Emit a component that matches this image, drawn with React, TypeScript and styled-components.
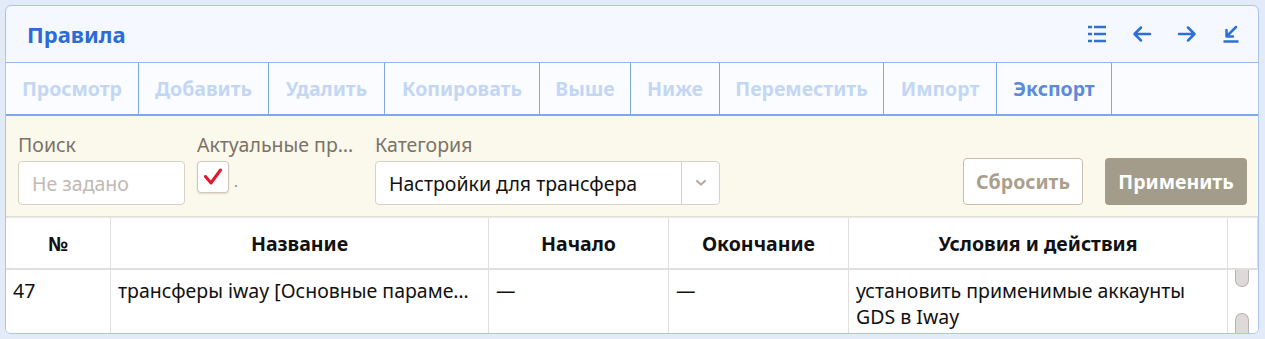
import * as React from "react";
import styled, { createGlobalStyle } from "styled-components";

const GlobalStyle = createGlobalStyle`
  html, body {
    margin: 0;
    padding: 0;
    background: #e3ebf8;
  }
  body {
    font-family: "Noto Sans", "Open Sans", sans-serif;
    font-size: 19.5px;
  }
  * {
    box-sizing: border-box;
  }
`;

const Page = styled.div`
  padding: 5px 6px 5px 5px;
`;

const Panel = styled.div`
  display: flex;
  flex-direction: column;
  height: 329px;
  border: 1px solid #a9c5f0;
  border-radius: 6px;
  background: #f5f8ff;
  overflow: hidden;
`;

const Header = styled.div`
  display: flex;
  align-items: center;
  height: 56px;
  padding: 0 18px 0 21px;
`;

const Title = styled.div`
  flex: 1;
  font-size: 22px;
  font-weight: 700;
  color: #2c6bd6;
`;

const HeaderIcons = styled.div`
  display: flex;
  align-items: center;
  gap: 25px;
  color: #2f6fd8;

  svg {
    display: block;
  }
`;

const Toolbar = styled.div`
  display: flex;
  height: 54px;
  border-top: 1px solid #94b8ee;
  border-bottom: 2px solid #7ea8e8;
  background: #fafcff;
`;

const ToolButton = styled.div<{ $active?: boolean; $width: number }>`
  display: flex;
  align-items: center;
  justify-content: center;
  width: ${(p) => p.$width}px;
  border-right: 1px solid #7ea8e8;
  font-weight: 700;
  color: ${(p) => (p.$active ? "#5b8bd9" : "#c3d7f5")};
`;

const Filters = styled.div`
  display: flex;
  align-items: flex-end;
  height: 101px;
  padding: 0 11px 11px 12px;
  background: #fbf8ec;
  border-bottom: 1px solid #e4ded0;
  box-shadow: 0 1px 1px rgba(0, 0, 0, 0.06);
`;

const Field = styled.div<{ $width: number }>`
  display: flex;
  flex-direction: column;
  width: ${(p) => p.$width}px;
  margin-right: 12px;
`;

const Label = styled.div`
  line-height: 27px;
  color: #7b7366;
  margin-bottom: 3px;
  padding-right: 4px;
  white-space: nowrap;
  overflow: hidden;
  text-overflow: ellipsis;
`;

const TextInput = styled.div`
  height: 44px;
  padding: 0 13px;
  display: flex;
  align-items: center;
  border: 1px solid #d9d1c6;
  border-radius: 4px;
  background: #fff;
  color: #c1b9b3;
`;

const CheckRow = styled.div`
  display: flex;
  align-items: flex-end;
  height: 44px;
  gap: 5px;
  padding-bottom: 12px;
`;

const CheckBox = styled.div`
  width: 32px;
  height: 32px;
  border: 1px solid #cfc7bd;
  border-radius: 4px;
  background: #fff;
  box-shadow: 0 1px 2px rgba(0, 0, 0, 0.12);
  display: flex;
  align-items: center;
  justify-content: center;
`;

const Dot = styled.span`
  font-size: 14px;
  line-height: 1;
  color: #8a8276;
  margin-bottom: 4px;
`;

const Select = styled.div`
  display: flex;
  height: 44px;
  border: 1px solid #d9d1c6;
  border-radius: 4px;
  background: #fff;
`;

const SelectValue = styled.div`
  flex: 1;
  display: flex;
  align-items: center;
  padding: 0 13px;
  color: #111;
`;

const SelectArrow = styled.div`
  width: 38px;
  display: flex;
  align-items: center;
  justify-content: center;
  border-left: 1px solid #d9d1c6;
  color: #b5ada3;
`;

const Spacer = styled.div`
  flex: 1;
`;

const Button = styled.div<{ $primary?: boolean; $width: number }>`
  display: flex;
  align-items: center;
  justify-content: center;
  width: ${(p) => p.$width}px;
  height: 47px;
  margin-left: ${(p) => (p.$primary ? 22 : 0)}px;
  border-radius: 4px;
  border: ${(p) => (p.$primary ? "none" : "1px solid #c9bea9")};
  background: ${(p) => (p.$primary ? "#a39c8a" : "#fff")};
  color: ${(p) => (p.$primary ? "#fff" : "#aa9f8c")};
  font-weight: 700;
`;

const Table = styled.div`
  display: grid;
  grid-template-columns: 105px 378px 180px 180px 379px 1fr;
  grid-template-rows: 52px 1fr;
  flex: 1;
  background: #fff;
  margin-top: 1px;
`;

const HeadCell = styled.div`
  display: flex;
  align-items: center;
  justify-content: center;
  border-right: 1px solid #e2dede;
  border-bottom: 2px solid #e2dede;
  font-weight: 700;
  color: #111;
`;

const Cell = styled.div<{ $clip?: boolean }>`
  padding: 8px 14px 0 7px;
  border-right: 1px solid #e2dede;
  line-height: 26px;
  color: #111;
  white-space: ${(p) => (p.$clip ? "nowrap" : "normal")};
  overflow: hidden;
  text-overflow: ellipsis;
`;

const ScrollCell = styled.div`
  display: flex;
  flex-direction: column;
  justify-content: space-between;
  align-items: center;
  padding-right: 2px;
`;

const Thumb = styled.div<{ $top?: boolean }>`
  width: 14px;
  height: ${(p) => (p.$top ? 17 : 20)}px;
  background: #dedada;
  border: 1px solid #b9b4b4;
  border-radius: ${(p) => (p.$top ? "0 0 7px 7px" : "7px 7px 0 0")};
  ${(p) => (p.$top ? "border-top: none;" : "border-bottom: none;")}
`;

const tools = [
  { label: "Просмотр", width: 133 },
  { label: "Добавить", width: 130 },
  { label: "Удалить", width: 116 },
  { label: "Копировать", width: 155 },
  { label: "Выше", width: 91 },
  { label: "Ниже", width: 89 },
  { label: "Переместить", width: 164 },
  { label: "Импорт", width: 113 },
  { label: "Экспорт", width: 115, active: true },
];

const columns = ["№", "Название", "Начало", "Окончание", "Условия и действия", ""];

const ListIcon = () => (
  <svg width="20" height="18" viewBox="0 0 20 18" fill="none" stroke="currentColor" strokeWidth="2.5">
    <path d="M1 2h4M7 2h12M1 9h4M7 9h12M1 16h4M7 16h12" />
  </svg>
);

const ArrowLeft = () => (
  <svg width="20" height="18" viewBox="0 0 20 18" fill="none" stroke="currentColor" strokeWidth="2.5" strokeLinecap="round" strokeLinejoin="round">
    <path d="M18 9H3M9 2.5L2.5 9 9 15.5" />
  </svg>
);

const ArrowRight = () => (
  <svg width="20" height="18" viewBox="0 0 20 18" fill="none" stroke="currentColor" strokeWidth="2.5" strokeLinecap="round" strokeLinejoin="round">
    <path d="M2 9h15M11 2.5L17.5 9 11 15.5" />
  </svg>
);

const CollapseIcon = () => (
  <svg width="18" height="18" viewBox="0 0 18 18" fill="none" stroke="currentColor" strokeWidth="2.5" strokeLinecap="round" strokeLinejoin="round">
    <path d="M14 2L5 11M4.5 5v6.5H11" />
    <path d="M1.5 16.5h15" strokeLinecap="butt" />
  </svg>
);

const CheckMark = () => (
  <svg width="20" height="18" viewBox="0 0 20 18" fill="none" stroke="#e0192c" strokeWidth="3" strokeLinecap="round" strokeLinejoin="round">
    <path d="M2.5 8.5L8 15 17.5 2" />
  </svg>
);

const Chevron = () => (
  <svg width="12" height="8" viewBox="0 0 12 8" fill="none" stroke="currentColor" strokeWidth="2.2" strokeLinecap="round" strokeLinejoin="round">
    <path d="M2 2l4 3.5L10 2" />
  </svg>
);

const App: React.FC = () => {
  return (
    <Page>
      <GlobalStyle />
      <Panel>
        <Header>
          <Title>Правила</Title>
          <HeaderIcons>
            <ListIcon />
            <ArrowLeft />
            <ArrowRight />
            <CollapseIcon />
          </HeaderIcons>
        </Header>

        <Toolbar>
          {tools.map((t) => (
            <ToolButton key={t.label} $width={t.width} $active={t.active}>
              {t.label}
            </ToolButton>
          ))}
        </Toolbar>

        <Filters>
          <Field $width={167}>
            <Label>Поиск</Label>
            <TextInput>Не задано</TextInput>
          </Field>
          <Field $width={166}>
            <Label>Актуальные правила</Label>
            <CheckRow>
              <CheckBox>
                <CheckMark />
              </CheckBox>
              <Dot>.</Dot>
            </CheckRow>
          </Field>
          <Field $width={345}>
            <Label>Категория</Label>
            <Select>
              <SelectValue>Настройки для трансфера</SelectValue>
              <SelectArrow>
                <Chevron />
              </SelectArrow>
            </Select>
          </Field>
          <Spacer />
          <Button $width={120}>Сбросить</Button>
          <Button $width={142} $primary>
            Применить
          </Button>
        </Filters>

        <Table>
          {columns.map((c, i) => (
            <HeadCell key={i}>{c}</HeadCell>
          ))}
          <Cell>47</Cell>
          <Cell $clip>трансферы iway [Основные параметры]</Cell>
          <Cell>—</Cell>
          <Cell>—</Cell>
          <Cell>установить применимые аккаунты GDS в Iway</Cell>
          <ScrollCell>
            <Thumb $top />
            <Thumb />
          </ScrollCell>
        </Table>
      </Panel>
    </Page>
  );
};

export default App;
